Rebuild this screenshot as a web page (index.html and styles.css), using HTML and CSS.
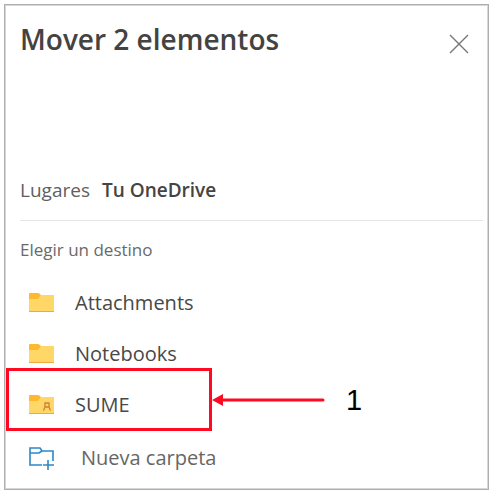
FILE: index.html
```html
<!DOCTYPE html>
<html lang="es">

<head>
    <meta charset="UTF-8">
    <meta name="viewport" content="width=device-width, initial-scale=1.0">
    <title>Mover 2 elementos</title>
    <link rel="stylesheet" href="styles.css">
</head>

<body>

    <main class="panel">
        <header class="panel-header">
            <h1>Mover 2 elementos</h1>
            <button type="button" class="close" aria-label="Cerrar">
                <svg width="20" height="20" viewBox="0 0 20 20"><path d="M1 1L19 19M19 1L1 19" /></svg>
            </button>
        </header>

        <div class="places">
            <span>Lugares</span>
            <strong>Tu OneDrive</strong>
        </div>

        <h2>Elegir un destino</h2>

        <ul class="folders">
            <li>
                <button type="button" class="folder">
                    <svg width="25" height="19" viewBox="0 0 25 19">
                        <path fill="#ffd766" d="M0 5H10L12 2H25V19H0Z" />
                        <path fill="#ffb92e" d="M0 1Q0 0 1 0H9Q10 0 12 2L10 5Q9 6 8 6H0Z" />
                        <path fill="#f0a840" d="M0 18H25V19H0Z" />
                    </svg>
                    Attachments
                </button>
            </li>
            <li>
                <button type="button" class="folder">
                    <svg width="25" height="19" viewBox="0 0 25 19">
                        <path fill="#ffd766" d="M0 5H10L12 2H25V19H0Z" />
                        <path fill="#ffb92e" d="M0 1Q0 0 1 0H9Q10 0 12 2L10 5Q9 6 8 6H0Z" />
                        <path fill="#f0a840" d="M0 18H25V19H0Z" />
                    </svg>
                    Notebooks
                </button>
            </li>
            <li class="marked">
                <button type="button" class="folder">
                    <svg width="25" height="19" viewBox="0 0 25 19">
                        <path fill="#ffd766" d="M0 5H10L12 2H25V19H0Z" />
                        <path fill="#ffb92e" d="M0 1Q0 0 1 0H9Q10 0 12 2L10 5Q9 6 8 6H0Z" />
                        <path fill="#f0a840" d="M0 18H25V19H0Z" />
                        <path fill="none" stroke="#cf7f35" stroke-width="1.3" d="M16 8H20V12H16ZM16 12L14.5 15.5M20 12L21.5 15.5" />
                    </svg>
                    SUME
                </button>
                <div class="callout">
                    <div class="callout-box"></div>
                    <svg width="113" height="12" viewBox="0 0 113 12">
                        <path fill="#ff0a22" d="M0 6L11 0V12Z" />
                        <path stroke="#ff0a22" stroke-width="3" stroke-linecap="round" d="M9 6H111" />
                    </svg>
                    <span>1</span>
                </div>
            </li>
            <li>
                <button type="button" class="folder new-folder">
                    <svg width="26" height="24" viewBox="0 0 26 24">
                        <path fill="none" stroke="#2b88cb" stroke-width="1.6" d="M13 19H1V2H11L13 5H24V15M1 7H10L13 5M19 14V24M14 19H25" />
                    </svg>
                    Nueva carpeta
                </button>
            </li>
        </ul>
    </main>

</body>

</html>
```
FILE: styles.css
```css
body {
    margin: 4px;
    font-family: "Open Sans", "Noto Sans", sans-serif;
    background-color: #fff;
    color: #484848;
}

h1,
h2,
ul {
    margin: 0;
    padding: 0;
    font-weight: normal;
}

button {
    padding: 0;
    border: none;
    background: none;
    color: inherit;
    font: inherit;
    cursor: pointer;
}

.panel {
    padding: 14px 5px 4px 15px;
    border: 1px solid #b0adad;
    outline: 1px solid #d9d6d6;
    outline-offset: -2px;
}

.panel-header {
    display: flex;
    justify-content: space-between;
    align-items: center;
    padding-right: 14px;
    margin-bottom: 115px;
}

.panel-header h1 {
    font-size: 28px;
    line-height: 40px;
    font-weight: 600;
    color: #444342;
}

.close {
    display: flex;
    margin-top: 10px;
}

.close svg {
    fill: none;
    stroke: #777;
    stroke-width: 1.4;
}

.places {
    display: flex;
    gap: 12px;
    padding-bottom: 14px;
    border-bottom: 1px solid #e6e6e6;
    font-size: 19px;
    line-height: 32px;
    color: #606060;
}

.places strong {
    font-weight: 600;
    color: #444;
}

h2 {
    padding: 17px 0 15px;
    font-size: 17px;
    line-height: 24px;
    color: #6a6a6a;
}

.folders {
    list-style: none;
}

.folder {
    display: flex;
    align-items: center;
    gap: 21px;
    width: 100%;
    height: 51px;
    padding-left: 9px;
    font-size: 20px;
    line-height: 28px;
    text-align: left;
}

.new-folder {
    gap: 26px;
    height: 55px;
    color: #666;
}

.marked {
    position: relative;
}

/* red frame, arrow and number on top of the row */
.callout {
    position: absolute;
    top: -11px;
    left: -14px;
    display: flex;
    align-items: center;
    pointer-events: none;
}

.callout-box {
    box-sizing: border-box;
    width: 206px;
    height: 63px;
    border: 3px solid #ff0a22;
}

.callout span {
    margin-left: 21px;
    font-family: "Liberation Sans", Arial, sans-serif;
    font-size: 29px;
    line-height: 32px;
    color: #000;
}
```
